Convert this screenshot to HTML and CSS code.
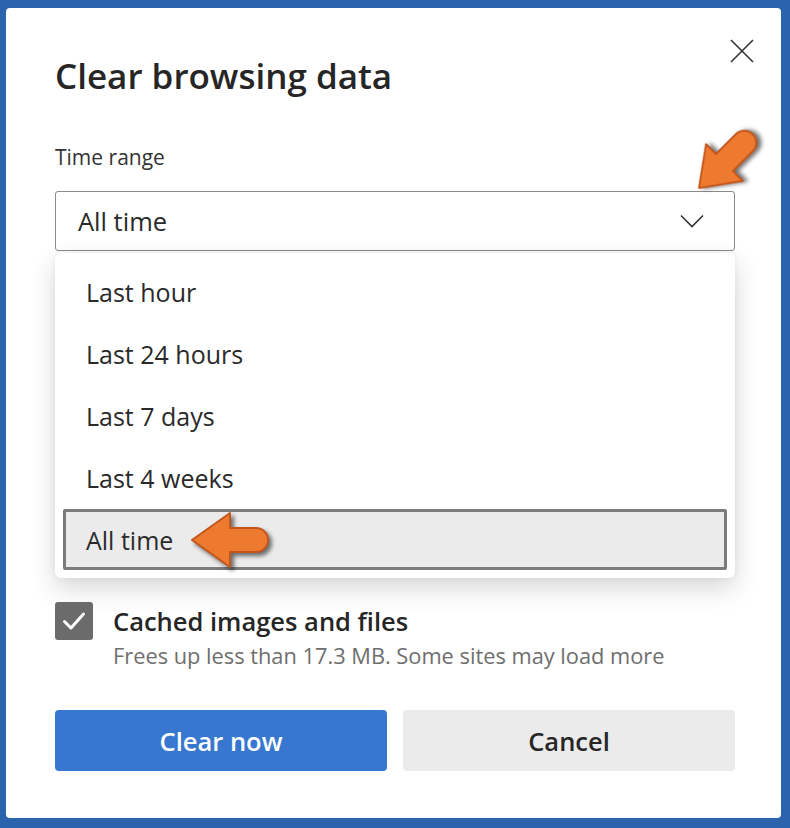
FILE: index.html
```html
<!DOCTYPE html>
<html lang="en">
<head>
<meta charset="utf-8">
<title>Clear browsing data</title>
<link rel="stylesheet" href="styles.css">
</head>
<body>
<div class="panel">
  <button class="close" aria-label="Close">
    <svg width="26" height="26" viewBox="0 0 26 26"><path d="M2 2 L24 24 M24 2 L2 24" stroke="#333" stroke-width="1.6" fill="none"/></svg>
  </button>
  <h1 class="title">Clear browsing data</h1>
  <div class="label">Time range</div>
  <div class="select">
    <span>All time</span>
    <svg class="chev" width="24" height="14" viewBox="0 0 24 14"><path d="M1 1.5 L12 12.5 L23 1.5" stroke="#333" stroke-width="1.6" fill="none"/></svg>
  </div>
  <div class="menu">
    <div class="item">Last hour</div>
    <div class="item">Last 24 hours</div>
    <div class="item">Last 7 days</div>
    <div class="item">Last 4 weeks</div>
    <div class="item selected">All time</div>
  </div>
  <div class="check-row">
    <div class="box">
      <svg width="38" height="38" viewBox="0 0 38 38"><path d="M9.5 19.5 L16 26 L28.5 12" stroke="#fff" stroke-width="3" fill="none" stroke-linecap="round" stroke-linejoin="round"/></svg>
    </div>
    <div class="check-text">
      <div class="check-label">Cached images and files</div>
      <div class="check-sub">Frees up less than 17.3 MB. Some sites may load more</div>
    </div>
  </div>
  <div class="actions">
    <button class="btn primary">Clear now</button>
    <button class="btn secondary">Cancel</button>
  </div>
</div>
<svg class="annot" width="790" height="828" viewBox="0 0 790 828">
  <g class="arrow" transform="translate(699 188) rotate(-45)">
    <path d="M0 0 L36 -26 L36 -12 L64 -12 A12 12 0 0 1 64 12 L36 12 L36 26 Z"/>
  </g>
  <g class="arrow" transform="translate(192 540)">
    <path d="M0 0 L38 -27 L38 -12 L64 -12 A12 12 0 0 1 64 12 L38 12 L38 27 Z"/>
  </g>
</svg>
</body>
</html>
```
FILE: styles.css
```css
* { box-sizing: border-box; }
html, body { margin: 0; padding: 0; }
body {
  width: 790px;
  height: 828px;
  overflow: hidden;
  background: #2b63ad;
  font-family: "Open Sans", "Noto Sans", "Liberation Sans", sans-serif;
  color: #262626;
  position: relative;
}
.panel {
  position: relative;
  margin: 8px 9px 0 6px;
  height: 810px;
  background: #fff;
  border-radius: 4px;
  padding: 48px 46px 0 49px;
}
.close {
  position: absolute;
  top: 30px;
  right: 26px;
  width: 26px;
  height: 26px;
  padding: 0;
  border: 0;
  background: none;
  display: flex;
}
.title {
  margin: 0;
  font-size: 35px;
  line-height: 40px;
  font-weight: 600;
  color: #262626;
}
.label {
  margin-top: 47px;
  font-size: 21px;
  line-height: 28px;
  color: #333;
}
.select {
  margin-top: 20px;
  height: 60px;
  border: 1px solid #8a8a8a;
  border-radius: 3px;
  padding: 0 30px 0 22px;
  display: flex;
  align-items: center;
  justify-content: space-between;
  font-size: 25.5px;
  color: #2a2a2a;
}
.menu {
  margin-top: 2px;
  padding: 8px;
  border-radius: 6px;
  background: #fff;
  box-shadow: 0 10px 26px rgba(0, 0, 0, 0.16), 0 0 6px rgba(0, 0, 0, 0.06);
}
.item {
  height: 62px;
  display: flex;
  align-items: center;
  padding-left: 23px;
  font-size: 25px;
  color: #2a2a2a;
}
.item.selected {
  height: 61px;
  background: #ebebeb;
  border: 3px solid #7b7b7b;
  border-radius: 2px;
  padding-left: 20px;
}
.check-row {
  margin-top: 24px;
  display: grid;
  grid-template-columns: 38px 1fr;
  column-gap: 20px;
}
.box {
  width: 38px;
  height: 38px;
  background: #6b6b6b;
  border-radius: 3px;
  display: flex;
}
.check-label {
  font-size: 25.5px;
  line-height: 38px;
  font-weight: 600;
  color: #262626;
}
.check-sub {
  margin-top: 2px;
  font-size: 21.8px;
  line-height: 28px;
  color: #6e6e6e;
}
.actions {
  margin-top: 40px;
  display: grid;
  grid-template-columns: 1fr 1fr;
  column-gap: 16px;
}
.btn {
  height: 61px;
  border: 0;
  border-radius: 4px;
  font-family: inherit;
  font-size: 25.5px;
  font-weight: 600;
}
.btn.primary { background: #3777cf; color: #fff; }
.btn.secondary { background: #ebebeb; color: #262626; }
.annot {
  position: absolute;
  left: 0;
  top: 0;
  pointer-events: none;
}
.arrow path {
  fill: #ee7a30;
  stroke: #c4561c;
  stroke-width: 2;
  stroke-linejoin: round;
}
.arrow {
  filter: drop-shadow(3px 3px 2px rgba(0, 0, 0, 0.55));
}
```
